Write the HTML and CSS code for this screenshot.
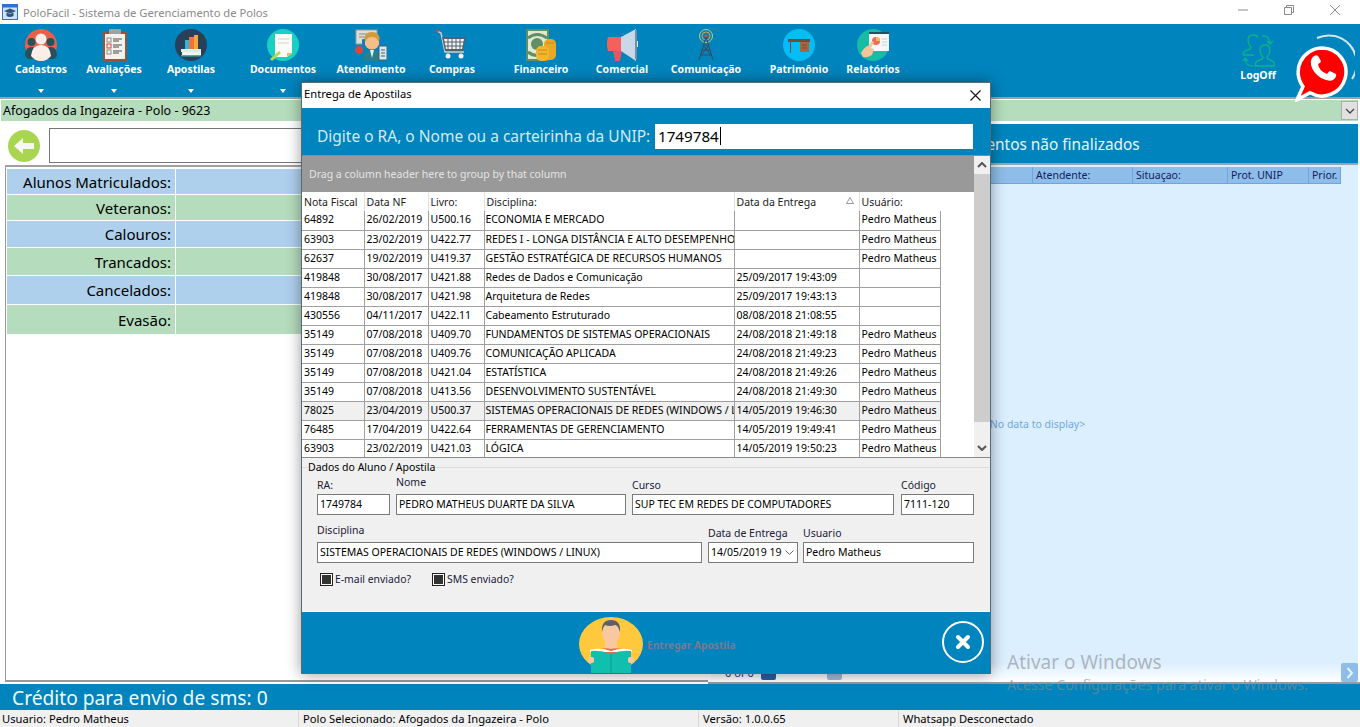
FILE: index.html
```html
<!DOCTYPE html>
<html lang="pt-BR">
  <head>
    <meta charset="UTF-8" />
    <title>PoloFacil - Sistema de Gerenciamento de Polos</title>
    <link rel="stylesheet" href="styles.css">
  </head>
  <body>
    <div class="app">
      <div class="titlebar">
        <svg class="app-icon" viewBox="0 0 16 16" width="16" height="16">
          <rect x="0.5" y="0.5" width="15" height="15" fill="#cfe3fb" stroke="#2f6fd8" />
          <rect x="0.5" y="0.5" width="15" height="3" fill="#2f6fd8" />
          <path d="M2 7l6-2.5L14 7 8 9.5z" fill="#31547e" />
          <path d="M4.5 8.5v3.5q3.5 1.8 7 0V8.5L8 10z" fill="#31547e" />
        </svg>
        <span class="app-title">PoloFacil - Sistema de Gerenciamento de Polos</span>
        <div class="win-buttons">
          <svg viewBox="0 0 10 10" width="10" height="10"><path d="M0 5h10" stroke="#8a8a8a" fill="none" /></svg>
          <svg viewBox="0 0 10 10" width="10" height="10"><path d="M.5 2.5h7v7h-7zM2.5 2.5v-2h7v7h-2" stroke="#8a8a8a" fill="none" /></svg>
          <svg viewBox="0 0 10 10" width="10" height="10"><path d="M0 0l10 10M10 0L0 10" stroke="#8a8a8a" fill="none" /></svg>
        </div>
      </div>

      <div class="ribbon">
        <div class="menu">
          <div class="menu-item">
            <svg viewBox="0 0 32 32" width="32" height="32">
              <circle cx="16" cy="16" r="16" fill="#e8604c" />
              <circle cx="6.5" cy="13" r="4" fill="#27505a" />
              <circle cx="25.5" cy="13" r="4" fill="#27505a" />
              <path d="M0 27q0-9 6.5-9t6.5 9v3H3zM19 27q0-9 6.5-9t6.5 9l-3 3H19z" fill="#27505a" />
              <circle cx="16" cy="10" r="5.5" fill="#fbeeea" />
              <path d="M6 27q1-11 10-11t10 11q-4 5-10 5T6 27z" fill="#fbeeea" />
            </svg>
            <span class="menu-label">Cadastros</span>
            <span class="caret"></span>
          </div>
          <div class="menu-item">
            <svg viewBox="0 0 32 32" width="32" height="32">
              <rect x="5" y="3" width="24" height="29" rx="1" fill="#9c5239" />
              <rect x="7" y="5" width="20" height="25" fill="#f4f2ec" />
              <rect x="11" y="0" width="12" height="5" rx="1" fill="#9aa3a8" />
              <rect x="9" y="9" width="4" height="4" fill="none" stroke="#8d8d8d" />
              <rect x="9" y="15" width="4" height="4" fill="none" stroke="#d6453c" />
              <rect x="9" y="21" width="4" height="4" fill="none" stroke="#8d8d8d" />
              <path d="M15 10h9M15 12h6M15 16h9M15 18h6M15 22h9M15 24h6" stroke="#4a4a4a" />
            </svg>
            <span class="menu-label">Avaliações</span>
            <span class="caret"></span>
          </div>
          <div class="menu-item">
            <svg viewBox="0 0 32 32" width="32" height="32">
              <circle cx="16" cy="16" r="16" fill="#28405a" />
              <rect x="14" y="8" width="5" height="12" fill="#f2713c" />
              <rect x="10" y="11" width="4" height="9" fill="#36b5d8" />
              <rect x="19" y="6" width="4" height="14" fill="#f2a93c" />
              <rect x="6" y="20" width="20" height="3" fill="#d9efe5" />
              <rect x="7" y="23" width="19" height="3" fill="#f5f5f0" />
              <rect x="6" y="26" width="20" height="1.5" fill="#3fb6a8" />
            </svg>
            <span class="menu-label">Apostilas</span>
            <span class="caret"></span>
          </div>
          <div class="menu-item">
            <svg viewBox="0 0 32 32" width="32" height="32">
              <circle cx="16" cy="16" r="16" fill="#19d0c2" />
              <path d="M8 5h17v19l-5 4H8z" fill="#fbfbf8" />
              <path d="M20 28v-4h5z" fill="#f3c14b" />
              <path d="M11 10h11M11 14h11" stroke="#e6e6e2" stroke-width="2" />
              <path d="M3 30l9-8 2 2-9 8z" fill="#b9d84e" />
            </svg>
            <span class="menu-label">Documentos</span>
            <span class="caret"></span>
          </div>
          <div class="menu-item">
            <svg viewBox="0 0 32 32" width="32" height="32">
              <rect x="1" y="1" width="21" height="14" fill="#dcdcd8" stroke="#9a9a96" />
              <path d="M4 5h10M4 8h8" stroke="#8a8a86" />
              <circle cx="17" cy="13" r="7.5" fill="#f6bd84" />
              <path d="M9 12q0-9 8-9t8 9h-2q-1-4-6-4t-6 4z" fill="#d19a3b" />
              <rect x="7" y="10" width="3" height="6" rx="1" fill="#1f78c4" />
              <rect x="24" y="10" width="3" height="6" rx="1" fill="#1f78c4" />
              <path d="M8 32q0-11 9-11t9 11z" fill="#2a7f8c" />
              <path d="M15 21h4l-2 8z" fill="#f0f0ea" />
              <circle cx="4" cy="21" r="4" fill="#d9473a" />
              <rect x="24" y="17" width="8" height="14" fill="#dbe8ee" stroke="#47606e" />
              <path d="M26 21h4M26 24h4M26 27h4" stroke="#47606e" />
            </svg>
            <span class="menu-label">Atendimento</span>
          </div>
          <div class="menu-item">
            <svg viewBox="0 0 32 32" width="32" height="32">
              <path d="M1 2l4 2 4 19h19" fill="none" stroke="#c9d0d6" stroke-width="1.5" />
              <circle cx="1.5" cy="2" r="1.5" fill="#d9473a" />
              <path d="M6 8h24l-3 14H9z" fill="#56616b" />
              <path d="M8 10h20l-2 10H10z" fill="#f3f4f5" />
              <path d="M12 9v12M16 9v12M20 9v12M24 9v12M8 13h20M9 17h18" stroke="#56616b" />
              <circle cx="12" cy="27" r="2.5" fill="#f3f4f5" />
              <circle cx="25" cy="27" r="2.5" fill="#f3f4f5" />
            </svg>
            <span class="menu-label">Compras</span>
          </div>
          <div class="menu-item">
            <svg viewBox="0 0 32 32" width="32" height="32">
              <rect x="1" y="0" width="23" height="32" fill="#5f8f62" />
              <rect x="3" y="2" width="19" height="28" fill="#dfe9d6" />
              <circle cx="12" cy="15" r="6" fill="#5f8f62" />
              <path d="M3 9q9-7 19 0M3 23q9 7 19 0" fill="none" stroke="#5f8f62" stroke-width="3" />
              <rect x="19" y="10" width="12" height="21" rx="5" fill="#e9a825" />
              <rect x="11" y="17" width="13" height="15" rx="5" fill="#f1b52e" />
              <path d="M13 21h9M13 25h9M21 14h8" stroke="#c98a16" />
            </svg>
            <span class="menu-label">Financeiro</span>
          </div>
          <div class="menu-item">
            <svg viewBox="0 0 32 32" width="32" height="32">
              <path d="M2 8h15v14H2q-2-7 0-14z" fill="#f4605c" />
              <path d="M15 8L30 0v32L15 22z" fill="#c9d8e8" />
              <rect x="29" y="1" width="2" height="29" fill="#6f8fa8" />
              <path d="M7 22h9l-2 10H9z" fill="#e0575f" />
              <path d="M31 12h3v6h-3z" fill="#dfe8f0" />
            </svg>
            <span class="menu-label">Comercial</span>
          </div>
          <div class="menu-item">
            <svg viewBox="0 0 32 32" width="32" height="32">
              <circle cx="16" cy="7" r="6.5" fill="none" stroke="#d6c46a" />
              <circle cx="16" cy="7" r="4" fill="none" stroke="#d6a040" />
              <circle cx="16" cy="7" r="1.5" fill="#d9473a" />
              <path d="M16 8L9 31M16 8l7 23M13 16h6M11.5 21h9M10 26h12M13 16l8 10M19 16l-8 10" fill="none" stroke="#3c4a56" />
            </svg>
            <span class="menu-label">Comunicação</span>
          </div>
          <div class="menu-item">
            <svg viewBox="0 0 32 32" width="32" height="32">
              <circle cx="16" cy="16" r="16" fill="#05bdf5" />
              <path d="M5 10h22v3H5z" fill="#7a4a33" />
              <path d="M7 13h1v11H7z" fill="#7a4a33" />
              <rect x="17" y="13" width="9" height="10" fill="#a5673f" />
              <path d="M19 16h5M19 19h5" stroke="#7a4a33" />
            </svg>
            <span class="menu-label">Patrimônio</span>
          </div>
          <div class="menu-item">
            <svg viewBox="0 0 32 32" width="32" height="32">
              <circle cx="16" cy="16" r="16" fill="#15bda4" />
              <rect x="12" y="5" width="20" height="17" fill="#f5f8f8" />
              <rect x="12" y="3" width="20" height="2" fill="#28505c" />
              <circle cx="19" cy="12" r="4" fill="#ef6a5a" />
              <path d="M19 12V8a4 4 0 0 1 4 4z" fill="#f2c14b" />
              <path d="M25 10h5M25 13h5M25 16h5" stroke="#c9d2d6" />
              <path d="M4 24q3-6 7-7l4-5 2 1-3 6 3 1-2 6q-5 3-9 2z" fill="#f6c49a" />
            </svg>
            <span class="menu-label">Relatórios</span>
          </div>
        </div>
        <div class="logoff">
          <svg viewBox="0 0 34 34" width="34" height="34" fill="none" stroke="#0ab585" stroke-width="1.3">
            <path d="M2 21h11M2 21q0-4 5-5 3-1 3-3-3-3-3-7 0-5 5-5 4 0 5 3" />
            <path d="M14 32h20q0-5-5-6-3-1-3-3 3-3 3-7 0-5-5-5t-5 5q0 4 3 7 0 2-3 3-5 1-5 6z" />
            <path d="M21 2q7-1 8 7m-3-2l3 3 3-3" />
            <path d="M12 32q-7 0-8-7m-2 2l2-3 3 3" />
          </svg>
          <span class="menu-label">LogOff</span>
        </div>
      </div>

      <div class="combo-bar">
        <div class="combo">
          <span class="combo-text">Afogados da Ingazeira - Polo - 9623</span>
          <span class="combo-button">
            <svg viewBox="0 0 10 6" width="10" height="6"><path d="M1 1l4 4 4-4" fill="none" stroke="#444" stroke-width="1.3" /></svg>
          </span>
        </div>
      </div>

      <div class="content">
        <div class="left-pane">
          <div class="search-row">
            <svg class="back" viewBox="0 0 32 32" width="32" height="32">
              <circle cx="16" cy="16" r="16" fill="#a9d651" />
              <path d="M6 16l9-8v5h11v6H15v5z" fill="#f6f8ef" />
            </svg>
            <div class="search-box"></div>
          </div>
          <div class="summary">
            <div class="summary-row blue h26"><span class="summary-label">Alunos Matriculados:</span></div>
            <div class="summary-row green h26"><span class="summary-label">Veteranos:</span></div>
            <div class="summary-row blue h27"><span class="summary-label">Calouros:</span></div>
            <div class="summary-row green h28"><span class="summary-label">Trancados:</span></div>
            <div class="summary-row blue h29"><span class="summary-label">Cancelados:</span></div>
            <div class="summary-row green h30"><span class="summary-label">Evasão:</span></div>
          </div>
        </div>

        <div class="right-pane">
          <div class="right-header">Atendimentos não finalizados</div>
          <div class="right-grid">
            <div class="grid-head">
              <span class="head-spacer"></span>
              <span class="head-cell w100">Atendente:</span>
              <span class="head-cell w95">Situaçao:</span>
              <span class="head-cell w81">Prot. UNIP</span>
              <span class="head-cell w34">Prior.</span>
            </div>
            <div class="no-data">&lt;No data to display&gt;</div>
            <div class="grid-foot">
              <span class="pager-text">0 of 0</span>
              <span class="pager-btn dark"></span>
              <span class="pager-btn light"></span>
              <span class="scroll-right">
                <svg viewBox="0 0 8 12" width="8" height="12"><path d="M1.5 1l4.5 5-4.5 5" fill="none" stroke="#e6f2fc" stroke-width="2" /></svg>
              </span>
            </div>
          </div>
        </div>
      </div>

      <div class="credit">Crédito para envio de sms: 0</div>

      <div class="status">
        <span class="status-cell w299">Usuario: Pedro Matheus</span>
        <span class="status-cell w400">Polo Selecionado: Afogados da Ingazeira - Polo</span>
        <span class="status-cell w200">Versão: 1.0.0.65</span>
        <span class="status-cell">Whatsapp Desconectado</span>
      </div>
    </div>

    <svg class="whatsapp" viewBox="0 0 60 68" width="60" height="68">
      <path d="M22 4A28 28 0 0 1 57 45" fill="none" stroke="#d4e4ee" stroke-width="2" />
      <path d="M27 14a24 24 0 1 1-12 44.8l-13 7 6-13.3A24 24 0 0 1 27 14z" fill="#ff0000" stroke="#fff" stroke-width="3.5" />
      <path transform="translate(0 7)" d="M17 17q3-4 6-2l3 5q0 2-3 3 1 7 9 10 2-3 3-3l6 3q1 3-3 6-4 2-12-2-8-5-10-13-1-4 1-7z" fill="#fff" />
    </svg>

    <div class="watermark">
      <div class="wm-title">Ativar o Windows</div>
      <div class="wm-text">Acesse Configurações para ativar o Windows.</div>
    </div>

    <div class="dialog">
      <div class="dialog-title">
        <span class="dialog-name">Entrega de Apostilas</span>
        <svg viewBox="0 0 11 11" width="11" height="11"><path d="M.5.5l10 10M10.5.5l-10 10" stroke="#111" fill="none" stroke-width="1.1" /></svg>
      </div>
      <div class="dialog-search">
        <label class="search-label">Digite o RA, o Nome ou a carteirinha da UNIP:</label>
        <div class="ra-input">1749784<span class="text-caret"></span></div>
      </div>
      <div class="grid-wrap">
        <div class="grid-main">
          <div class="group-panel">Drag a column header here to group by that column</div>
          <table class="deliveries">
            <thead>
              <tr>
                <th class="c-nf">Nota Fiscal</th>
                <th class="c-date">Data NF</th>
                <th class="c-book">Livro:</th>
                <th class="c-subject">Disciplina:</th>
                <th class="c-when sorted">Data da Entrega<svg viewBox="0 0 8 7" width="8" height="7"><path d="M4 .5l3.5 6H.5z" fill="none" stroke="#999" /></svg></th>
                <th class="c-user">Usuário:</th>
              </tr>
            </thead>
            <tbody>
              <tr><td>64892</td><td>26/02/2019</td><td>U500.16</td><td>ECONOMIA E MERCADO</td><td></td><td>Pedro Matheus</td></tr>
              <tr><td>63903</td><td>23/02/2019</td><td>U422.77</td><td>REDES I - LONGA DISTÂNCIA E ALTO DESEMPENHO</td><td></td><td>Pedro Matheus</td></tr>
              <tr><td>62637</td><td>19/02/2019</td><td>U419.37</td><td>GESTÃO ESTRATÉGICA DE RECURSOS HUMANOS</td><td></td><td>Pedro Matheus</td></tr>
              <tr><td>419848</td><td>30/08/2017</td><td>U421.88</td><td>Redes de Dados e Comunicação</td><td>25/09/2017 19:43:09</td><td></td></tr>
              <tr><td>419848</td><td>30/08/2017</td><td>U421.98</td><td>Arquitetura de Redes</td><td>25/09/2017 19:43:13</td><td></td></tr>
              <tr><td>430556</td><td>04/11/2017</td><td>U422.11</td><td>Cabeamento Estruturado</td><td>08/08/2018 21:08:55</td><td></td></tr>
              <tr><td>35149</td><td>07/08/2018</td><td>U409.70</td><td>FUNDAMENTOS DE SISTEMAS OPERACIONAIS</td><td>24/08/2018 21:49:18</td><td>Pedro Matheus</td></tr>
              <tr><td>35149</td><td>07/08/2018</td><td>U409.76</td><td>COMUNICAÇÃO APLICADA</td><td>24/08/2018 21:49:23</td><td>Pedro Matheus</td></tr>
              <tr><td>35149</td><td>07/08/2018</td><td>U421.04</td><td>ESTATÍSTICA</td><td>24/08/2018 21:49:26</td><td>Pedro Matheus</td></tr>
              <tr><td>35149</td><td>07/08/2018</td><td>U413.56</td><td>DESENVOLVIMENTO SUSTENTÁVEL</td><td>24/08/2018 21:49:30</td><td>Pedro Matheus</td></tr>
              <tr class="current"><td>78025</td><td>23/04/2019</td><td>U500.37</td><td>SISTEMAS OPERACIONAIS DE REDES (WINDOWS / LINUX)</td><td>14/05/2019 19:46:30</td><td>Pedro Matheus</td></tr>
              <tr><td>76485</td><td>17/04/2019</td><td>U422.64</td><td>FERRAMENTAS DE GERENCIAMENTO</td><td>14/05/2019 19:49:41</td><td>Pedro Matheus</td></tr>
              <tr><td>63903</td><td>23/02/2019</td><td>U421.03</td><td>LÓGICA</td><td>14/05/2019 19:50:23</td><td>Pedro Matheus</td></tr>
            </tbody>
          </table>
        </div>
        <div class="scrollbar">
          <span class="scroll-arrow">
            <svg viewBox="0 0 10 6" width="10" height="6"><path d="M1 5l4-4 4 4" fill="none" stroke="#555" stroke-width="2" /></svg>
          </span>
          <span class="scroll-thumb"></span>
          <span class="scroll-track"></span>
          <span class="scroll-arrow">
            <svg viewBox="0 0 10 6" width="10" height="6"><path d="M1 1l4 4 4-4" fill="none" stroke="#555" stroke-width="2" /></svg>
          </span>
        </div>
      </div>

      <div class="form">
        <div class="legend-line"><span class="legend">Dados do Aluno / Apostila</span></div>
        <div class="form-row first">
          <div class="field w73"><span class="field-label">RA:</span><div class="field-input">1749784</div></div>
          <div class="field w230"><span class="field-label raised">Nome</span><div class="field-input">PEDRO MATHEUS DUARTE DA SILVA</div></div>
          <div class="field w262"><span class="field-label">Curso</span><div class="field-input">SUP TEC EM REDES DE COMPUTADORES</div></div>
          <div class="field w73"><span class="field-label">Código</span><div class="field-input">7111-120</div></div>
        </div>
        <div class="form-row second">
          <div class="field w385"><span class="field-label raised">Disciplina</span><div class="field-input">SISTEMAS OPERACIONAIS DE REDES (WINDOWS / LINUX)</div></div>
          <div class="field w90">
            <span class="field-label">Data de Entrega</span>
            <div class="field-input date-input">
              <span>14/05/2019 19</span>
              <svg viewBox="0 0 9 5" width="9" height="5"><path d="M.5.5l4 4 4-4" fill="none" stroke="#666" /></svg>
            </div>
          </div>
          <div class="field w171"><span class="field-label">Usuario</span><div class="field-input">Pedro Matheus</div></div>
        </div>
        <div class="checks">
          <span class="check"><span class="check-box"></span>E-mail enviado?</span>
          <span class="check"><span class="check-box"></span>SMS enviado?</span>
        </div>
      </div>

      <div class="dialog-foot">
        <div class="deliver">
          <svg viewBox="0 0 64 56" width="64" height="56">
            <ellipse cx="32" cy="27" rx="32" ry="27" fill="#ffc83d" />
            <rect x="26" y="24" width="12" height="12" fill="#f8c9a0" />
            <ellipse cx="32" cy="16" rx="9" ry="11" fill="#f8c9a0" />
            <path d="M23 15q-1-12 9-12t9 12q-2-7-5-7-5 2-10 0-2 2-3 7z" fill="#5e6066" />
            <path d="M16 34q8-4 16-2 8-2 16 2v10H16z" fill="#f2604f" />
            <path d="M11 33q10-3 21 1 11-4 21-1v2H11z" fill="#fff" />
            <path d="M12 34q10-1 20 3 10-4 20-3v22H12z" fill="#10bfae" />
            <path d="M32 37v19" stroke="#0a9c8e" />
            <rect x="9" y="40" width="6" height="6" rx="2" fill="#f8c9a0" />
            <rect x="49" y="40" width="6" height="6" rx="2" fill="#f8c9a0" />
          </svg>
          <span class="deliver-label">Entregar Apostila</span>
        </div>
        <svg class="close-round" viewBox="0 0 42 42" width="42" height="42">
          <circle cx="21" cy="21" r="20" fill="none" stroke="#fff" stroke-width="2" />
          <path d="M16 16l10 10M26 16L16 26" stroke="#fff" stroke-width="4" stroke-linecap="round" />
        </svg>
      </div>
    </div>
  </body>
</html>
```

FILE: styles.css
```css
* {
  box-sizing: border-box;
}
body {
  margin: 0;
  width: 1360px;
  height: 727px;
  overflow: hidden;
  position: relative;
  background: #fff;
  font-family: "Noto Sans", "Open Sans", sans-serif;
  font-size: 12px;
  color: #000;
}
.app {
  display: flex;
  flex-direction: column;
  height: 727px;
}

/* window title */
.titlebar {
  height: 24px;
  flex: none;
  display: flex;
  align-items: center;
  padding: 0 0 0 2px;
  background: #fff;
}
.app-title {
  margin-left: 5px;
  color: #8a8a8a;
  font-size: 11.2px;
}
.win-buttons {
  margin-left: auto;
  display: flex;
  gap: 36px;
  padding: 0 20px 4px 0;
}

/* top menu */
.ribbon {
  height: 73px;
  flex: none;
  display: flex;
  background: #0084bd;
  padding-top: 5px;
}
.menu {
  display: grid;
  grid-template-columns: 6px 70px 76px 78px 106px 70px 92px 86px 76px 92px 94px 54px;
  width: 900px;
}
.menu-item {
  display: flex;
  flex-direction: column;
  align-items: center;
  position: relative;
}
.menu-item:first-child {
  grid-column: 2;
}
.menu-label {
  margin-top: 0;
  color: #fff;
  font-size: 10.5px;
  font-weight: 700;
  line-height: 16px;
  white-space: nowrap;
}
.caret {
  margin-top: 12px;
  border-left: 3px solid transparent;
  border-right: 3px solid transparent;
  border-top: 4px solid #fff;
}
.logoff {
  margin-left: 341px;
  width: 34px;
  display: flex;
  flex-direction: column;
  align-items: center;
  padding-top: 5px;
}
.logoff .menu-label {
  margin-top: -1px;
}

/* polo selector */
.combo-bar {
  height: 27px;
  flex: none;
  background: #fff;
  border-top: 2px solid #a0a0a0;
  padding: 1px 2px 3px 1px;
}
.combo {
  height: 21px;
  display: flex;
  align-items: center;
  background: #b5dcbd;
  padding-left: 2px;
}
.combo-text {
  font-size: 12.5px;
}
.combo-button {
  margin-left: auto;
  width: 17px;
  height: 19px;
  display: flex;
  align-items: center;
  justify-content: center;
  background: #e1e1e1;
  border: 1px solid #adadad;
}

/* main area */
.content {
  flex: 1;
  display: flex;
  min-height: 0;
}
.left-pane {
  width: 708px;
  display: flex;
  flex-direction: column;
  padding-left: 5px;
}
.search-row {
  height: 43px;
  display: flex;
  align-items: flex-start;
  gap: 9px;
  padding: 4px 0 0 3px;
  border-bottom: 2px solid #a0a0a0;
}
.back {
  margin-top: 2px;
}
.search-box {
  flex: 1;
  height: 35px;
  background: #fff;
  border: 1px solid #767676;
}
.summary {
  flex: 1;
  margin-bottom: 2px;
  padding: 2px 0 0 1px;
  border-left: 1px solid #9a9a9a;
  border-bottom: 2px solid #9a9a9a;
}
.summary-row {
  display: flex;
  border-bottom: 1px solid #fff;
  font-size: 15px;
}
.summary-row.h26 { height: 26px; }
.summary-row.h27 { height: 27px; }
.summary-row.h28 { height: 28px; }
.summary-row.h29 { height: 29px; }
.summary-row.h30 { height: 30px; }
.summary-row.blue { background: #aed0ed; }
.summary-row.green { background: #b5dcbd; }
.summary-label {
  width: 169px;
  padding: 2px 4px 0 0;
  text-align: right;
  line-height: 23px;
  border-right: 1px solid #fff;
}
.summary-row.h28 .summary-label,
.summary-row.h29 .summary-label {
  padding-top: 3px;
}
.summary-row.h30 .summary-label {
  padding-top: 4px;
}
.right-pane {
  flex: 1;
  display: flex;
  flex-direction: column;
  padding: 0 2px 0 3px;
  border-bottom: 2px solid #9a9a9a;
}
.right-header {
  height: 39px;
  flex: none;
  padding-left: 214px;
  background: #0084bd;
  color: #e8f4fa;
  font-size: 15.4px;
  line-height: 41px;
  white-space: nowrap;
}
.right-grid {
  flex: 1;
  display: flex;
  flex-direction: column;
  position: relative;
  background: #dcefff;
  border-top: 2px solid #9aa5ad;
  padding-top: 2px;
}
.grid-head {
  height: 17px;
  flex: none;
  display: flex;
  width: 630px;
  background: #8dbde8;
  border-bottom: 1px solid #6fa5db;
}
.head-spacer {
  width: 321px;
}
.head-cell {
  padding-left: 3px;
  border-left: 1px solid #6fa5db;
  color: #10205e;
  font-size: 10.5px;
  line-height: 17px;
}
.head-cell.w100 { width: 100px; }
.head-cell.w95 { width: 95px; }
.head-cell.w81 { width: 81px; }
.head-cell.w34 { width: 33px; border-right: 1px solid #6fa5db; }
.no-data {
  flex: 1;
  display: flex;
  align-items: center;
  justify-content: center;
  color: #6fa8dc;
  font-size: 10.5px;
}
.grid-foot {
  height: 19px;
  flex: none;
  display: flex;
  align-items: center;
  padding-left: 14px;
  background: linear-gradient(#dcefff, #fff);
  font-size: 11px;
}
.pager-text {
  color: #1c3a7a;
}
.pager-btn {
  width: 15px;
  height: 15px;
  border-radius: 2px;
  margin-left: 7px;
}
.pager-btn.dark { background: #2a5ca8; }
.pager-btn.light { background: #9db9dc; margin-left: 51px; }
.scroll-right {
  margin-left: auto;
  width: 17px;
  height: 19px;
  display: flex;
  align-items: center;
  justify-content: center;
  background: #8dbde8;
  border-radius: 2px;
}

/* bottom bars */
.credit {
  height: 26px;
  flex: none;
  padding-left: 12px;
  background: #0084bd;
  color: #f2f9fc;
  font-size: 19.2px;
  line-height: 27px;
}
.status {
  height: 17px;
  flex: none;
  display: flex;
  background: #f0f0f0;
  font-size: 11.2px;
  line-height: 17px;
}
.status-cell {
  padding-left: 4px;
  white-space: nowrap;
}
.status-cell.w299 { width: 299px; padding-left: 2px; border-right: 1px solid #d8d8d8; }
.status-cell.w400 { width: 400px; border-right: 1px solid #d8d8d8; }
.status-cell.w200 { width: 200px; border-right: 1px solid #d8d8d8; }

/* things lying over the window */
.whatsapp {
  position: absolute;
  left: 1295px;
  top: 34px;
}
.watermark {
  position: absolute;
  left: 1007px;
  top: 649px;
  color: rgba(140, 140, 140, 0.6);
  white-space: nowrap;
}
.wm-title {
  font-size: 19px;
  line-height: 26px;
}
.wm-text {
  font-size: 14.2px;
  line-height: 20px;
}

/* modal */
.dialog {
  position: absolute;
  left: 301px;
  top: 82px;
  width: 690px;
  height: 592px;
  display: flex;
  flex-direction: column;
  background: #f0f0f0;
  border: 1px solid #5a6a74;
  box-shadow: 0 0 14px rgba(0, 0, 0, 0.4);
}
.dialog-title {
  height: 25px;
  flex: none;
  display: flex;
  align-items: center;
  justify-content: space-between;
  padding: 0 9px 0 2px;
  background: #fff;
  font-size: 11.2px;
}
.dialog-name {
  padding-bottom: 5px;
}
.dialog-search {
  height: 48px;
  flex: none;
  display: flex;
  align-items: flex-start;
  padding: 16px 17px 0 15px;
  background: #0084bd;
  border-bottom: 1px solid #8a8a8a;
}
.search-label {
  width: 338px;
  flex: none;
  color: #d5e9f4;
  font-size: 15.5px;
  line-height: 24px;
  white-space: nowrap;
}
.ra-input {
  flex: 1;
  height: 25px;
  padding-left: 3px;
  background: #fff;
  font-size: 15.2px;
  line-height: 25px;
}
.text-caret {
  display: inline-block;
  width: 1px;
  height: 18px;
  margin-left: 1px;
  vertical-align: -3px;
  background: #000;
}
.grid-wrap {
  height: 302px;
  flex: none;
  display: flex;
  background: #fff;
  border-bottom: 1px solid #8a8a8a;
}
.grid-main {
  width: 672px;
  overflow: hidden;
}
.group-panel {
  height: 36px;
  padding-left: 7px;
  background: #999;
  color: #e4e4e4;
  font-size: 10.5px;
  line-height: 37px;
}
.deliveries {
  width: 638px;
  table-layout: fixed;
  border-collapse: collapse;
  font-size: 10.5px;
}
.deliveries th {
  height: 19px;
  padding: 0 0 0 2px;
  font-weight: 400;
  text-align: left;
  color: #222;
  border-left: 1px solid #e2e2e2;
  white-space: nowrap;
}
.deliveries th:first-child {
  border-left: 0;
}
.deliveries td {
  height: 19px;
  padding: 0 0 2px 2px;
  border: 1px solid #a0a0a0;
  border-top: 0;
  overflow: hidden;
  white-space: nowrap;
}
.deliveries td:first-child {
  border-left: 0;
}
.deliveries td:nth-child(4) {
  padding-left: 1px;
}
.deliveries .current td {
  background: #f0f0f0;
}
.c-nf { width: 62px; }
.c-date { width: 64px; }
.c-book { width: 56px; }
.c-subject { width: 250px; }
.c-when { width: 125px; }
.c-user { width: 81px; }
.sorted {
  position: relative;
}
.sorted svg {
  position: absolute;
  right: 5px;
  top: 5px;
}
.scrollbar {
  flex: 1;
  display: flex;
  flex-direction: column;
  background: #f0f0f0;
}
.scroll-arrow {
  height: 18px;
  flex: none;
  display: flex;
  align-items: center;
  justify-content: center;
}
.scroll-thumb {
  height: 248px;
  flex: none;
  background: #cdcdcd;
}
.scroll-track {
  flex: 1;
}
.form {
  flex: 1;
  padding: 0 0 0 15px;
  position: relative;
}
.legend-line {
  height: 14px;
  margin: 2px 0 0 -15px;
  padding-left: 6px;
  background: linear-gradient(transparent 7px, #dcdcdc 7px, #dcdcdc 8px, transparent 8px);
}
.legend {
  display: inline-block;
  padding-right: 1px;
  background: #f0f0f0;
  font-size: 10.5px;
  line-height: 14px;
  vertical-align: top;
}
.form-row {
  display: flex;
  gap: 6px;
}
.form-row.first {
  padding-top: 3px;
}
.form-row.second {
  padding-top: 10px;
}
.field {
  display: flex;
  flex-direction: column;
}
.field.w73 { width: 73px; }
.field.w230 { width: 230px; }
.field.w262 { width: 262px; margin-right: 1px; }
.field.w385 { width: 385px; }
.field.w90 { width: 90px; }
.field.w171 { width: 171px; margin-left: -1px; }
.field-label {
  height: 17px;
  color: #1a1a3a;
  font-size: 10.5px;
  line-height: 16px;
}
.field-label.raised {
  line-height: 10px;
}
.field-input {
  height: 21px;
  padding-left: 2px;
  background: #fff;
  border: 1px solid #7a7a7a;
  font-size: 10.5px;
  line-height: 19px;
  white-space: nowrap;
  overflow: hidden;
}
.date-input {
  display: flex;
  align-items: center;
  justify-content: space-between;
  padding-right: 3px;
}
.checks {
  display: flex;
  gap: 21px;
  padding: 9px 0 0 3px;
}
.check {
  display: flex;
  align-items: center;
  gap: 2px;
  color: #1a1a3a;
  font-size: 10.4px;
}
.check-box {
  width: 13px;
  height: 13px;
  background: #fff;
  border: 1px solid #222;
  box-shadow: inset 0 0 0 1px #fff, inset 0 0 0 6px #333;
}
.dialog-foot {
  height: 62px;
  flex: none;
  display: flex;
  align-items: center;
  justify-content: space-between;
  padding: 0 6px 0 277px;
  background: #0084bd;
  border-top: 1px solid #fff;
}
.deliver {
  display: flex;
  align-items: center;
  gap: 4px;
  padding-top: 4px;
}
.deliver-label {
  color: #7a7a8c;
  font-size: 10.2px;
  font-weight: 700;
}
.close-round {
  margin-top: -2px;
}
```
